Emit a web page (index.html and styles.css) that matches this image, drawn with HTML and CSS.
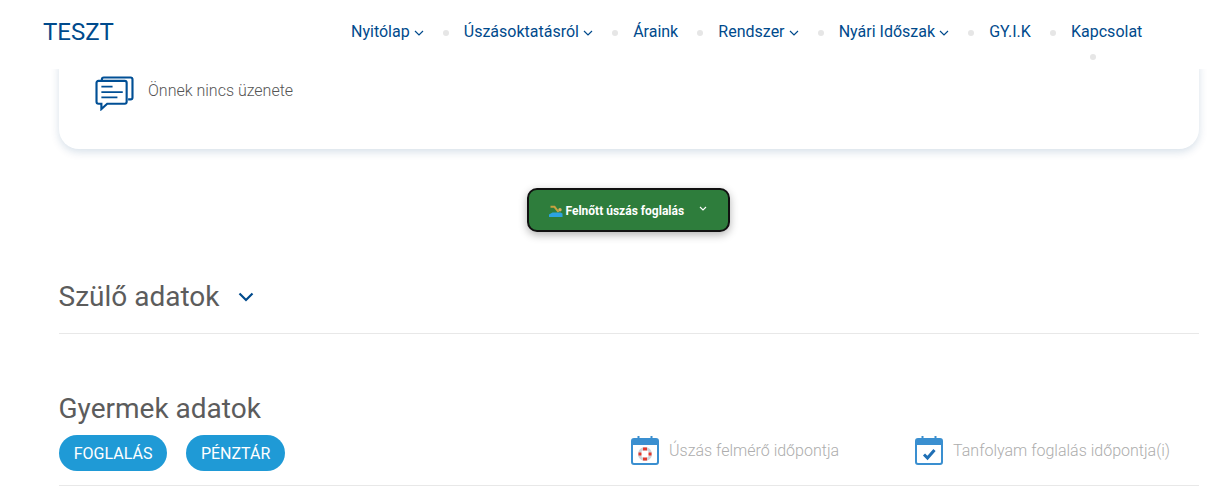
FILE: index.html
```html
<!DOCTYPE html>
<html lang="hu">
<head>
<meta charset="utf-8">
<title>TESZT</title>
<link rel="stylesheet" href="styles.css">
</head>
<body>
<header class="topbar">
  <a class="brand">TESZT</a>
  <nav class="nav">
    <a class="nav-item">Nyitólap<svg class="nav-chev" viewBox="0 0 10 6"><path d="M1 1l4 4 4-4"/></svg></a>
    <i class="dot"></i>
    <a class="nav-item">Úszásoktatásról<svg class="nav-chev" viewBox="0 0 10 6"><path d="M1 1l4 4 4-4"/></svg></a>
    <i class="dot"></i>
    <a class="nav-item">Áraink</a>
    <i class="dot"></i>
    <a class="nav-item">Rendszer<svg class="nav-chev" viewBox="0 0 10 6"><path d="M1 1l4 4 4-4"/></svg></a>
    <i class="dot"></i>
    <a class="nav-item">Nyári Időszak<svg class="nav-chev" viewBox="0 0 10 6"><path d="M1 1l4 4 4-4"/></svg></a>
    <i class="dot"></i>
    <a class="nav-item">GY.I.K</a>
    <i class="dot"></i>
    <a class="nav-item nav-last">Kapcsolat<i class="dot dot-wrapped"></i></a>
  </nav>
</header>
<main class="content">
  <section class="msg-card">
    <svg class="msg-icon" viewBox="0 0 40 36" fill="none">
      <path class="msg-back" d="M7 5V3.500A2 2 0 0 1 9 1.500h27.500a2 2 0 0 1 2 2V22a2 2 0 0 1-2 2H34"/>
      <path class="msg-front" d="M3.500 5h27a2 2 0 0 1 2 2v19.500a2 2 0 0 1-2 2H12.500L6.500 34v-5.500h-3a2 2 0 0 1-2-2V7a2 2 0 0 1 2-2z"/>
      <path class="msg-lines" d="M6.500 11H18M6.500 16.500H28.500M6.500 22H23"/>
    </svg>
    <p class="msg-text">Önnek nincs üzenete</p>
  </section>

  <div class="book-row">
    <button class="book-btn">
      <svg class="swim" viewBox="0 0 14 12"><path d="M1.500 1.800H5.500L9.500 7" fill="none" stroke="#c9a23f" stroke-width="2"/><circle cx="11" cy="4.800" r="1.700" fill="#d8b060"/><path d="M3.500 7.500h8l2 1v3.500H0V9.500z" fill="#2ca3e0"/></svg>
      <span>Felnőtt úszás foglalás</span>
      <svg class="book-chev" viewBox="0 0 8 5"><path d="M1 1l3 3 3-3"/></svg>
    </button>
  </div>

  <section class="parent">
    <h2 class="sec-title">Szülő adatok<svg class="sec-chev" viewBox="0 0 16 10"><path d="M1.500 1.500L8 8l6.500-6.500"/></svg></h2>
  </section>

  <section class="child">
    <h2 class="sec-title">Gyermek adatok</h2>
    <div class="child-row">
      <a class="pill pill-first">FOGLALÁS</a>
      <a class="pill">PÉNZTÁR</a>
      <div class="slot slot-first">
        <svg class="cal" viewBox="0 0 28 30" fill="none">
          <path class="cal-body" d="M3 4h22a2 2 0 0 1 2 2v21a2 2 0 0 1-2 2H3a2 2 0 0 1-2-2V6a2 2 0 0 1 2-2z"/>
          <path class="cal-head" d="M1 5h26v5H1z"/>
          <path class="cal-pin" d="M7.500 1v5M20.500 1v5"/>
          <circle cx="14" cy="19" r="5.500" stroke="#cfd3d8" stroke-width="3"/>
          <path d="M12 12.500h4v3h-4zM12 22.500h4v3h-4zM7.500 17.500h3v3h-3zM17.500 17.500h3v3h-3z" fill="#e2392d"/>
        </svg>
        <span>Úszás felmérő időpontja</span>
      </div>
      <div class="slot">
        <svg class="cal" viewBox="0 0 28 30" fill="none">
          <path class="cal-body" d="M3 4h22a2 2 0 0 1 2 2v21a2 2 0 0 1-2 2H3a2 2 0 0 1-2-2V6a2 2 0 0 1 2-2z"/>
          <path class="cal-head" d="M1 5h26v5H1z"/>
          <path class="cal-pin" d="M7.500 1v5M20.500 1v5"/>
          <path class="cal-check" d="M9 19.500l3.500 3.500 7-8"/>
        </svg>
        <span>Tanfolyam foglalás időpontja(i)</span>
      </div>
    </div>
  </section>
</main>
</body>
</html>
```
FILE: styles.css
```css
* { box-sizing: border-box; }
html, body { margin: 0; height: 498px; overflow: hidden; }
body { background: #fff; font-family: Roboto, "Liberation Sans", sans-serif; color: #555; }

.topbar {
  position: relative;
  z-index: 2;
  height: 69px;
  display: flex;
  align-items: flex-start;
  background: #fff;
  padding-left: 43px;
}
.brand { font-size: 24px; line-height: 28px; margin-top: 18px; color: #004a8c; width: 308px; }
.nav { display: flex; align-items: center; height: 20px; margin-top: 22px; }
.nav-item { display: flex; align-items: center; font-size: 16px; line-height: 20px; color: #004a8c; white-space: nowrap; }
.nav-chev { width: 10px; height: 6px; margin-left: 4px; margin-top: 1px; fill: none; stroke: #004a8c; stroke-width: 1.200; }
.dot { width: 6px; height: 6px; border-radius: 50%; background: #e6e6e6; margin: 1px 15px 0 19.150px; flex: none; }
.nav-last { position: relative; }
.dot-wrapped { position: absolute; left: 19px; top: 32px; margin: 0; }

.content { padding: 0 9px 0 59px; }
.msg-card {
  margin-top: -8px;
  height: 88px;
  display: flex;
  align-items: flex-start;
  background: #fff;
  border-radius: 0 0 20px 20px;
  box-shadow: 0 3px 8px rgba(0, 60, 120, .16);
  padding: 15px 0 0 36px;
}
.msg-icon { width: 39px; height: 35px; flex: none; }
.msg-back, .msg-front { stroke: #004f95; stroke-width: 2.200; }
.msg-lines { stroke: #004f95; stroke-width: 1.800; }
.msg-text { margin: 5px 0 0 14px; font-size: 16px; line-height: 19px; font-weight: 300; color: #555; }

.book-row { display: flex; justify-content: center; margin-top: 39px; padding-right: 2px; }
.book-btn {
  width: 203px;
  height: 44px;
  display: flex;
  align-items: center;
  padding: 2px 0 0 20px;
  background: #2e7d3c;
  border: 2px solid #111;
  border-radius: 10px;
  box-shadow: 0 3px 9px rgba(0, 0, 0, .3);
  color: #fff;
  font: 700 12px/14px Roboto, sans-serif;
}
.swim { width: 14px; height: 12px; margin: 0 3px 0 0; flex: none; }
.book-chev { width: 8px; height: 5px; margin: -5px 0 0 15px; fill: none; stroke: #fff; stroke-width: 1.100; }

.sec-title { margin: 0 0 0 -.500px; font-size: 28px; line-height: 33px; font-weight: 400; color: #5c5c5c; display: flex; align-items: center; }
.sec-chev { width: 16px; height: 10px; margin: 1px 0 0 19px; fill: none; stroke: #004a8c; stroke-width: 2.200; }
.parent { margin-top: 47px; height: 55px; border-bottom: 1px solid #e8e8e8; padding-top: 1px; }
.child { margin-top: 58px; }
.child-row { height: 51px; margin-top: 10px; display: flex; align-items: flex-start; border-bottom: 1px solid #e8e8e8; }
.pill {
  height: 36px;
  display: flex;
  align-items: center;
  padding: 0 14.750px;
  border-radius: 18px;
  background: #1f9ad6;
  color: #fff;
  font-size: 16px;
}
.pill-first { margin-right: 19px; }
.slot { display: flex; align-items: center; height: 30px; margin-top: 0; color: #adadad; font-size: 16px; font-weight: 300; white-space: nowrap; }
.slot-first { margin-left: 346px; margin-right: 76px; }
.cal { width: 28px; height: 30px; margin-right: 10px; flex: none; }
.cal-body { stroke: #3a8fd0; stroke-width: 2; fill: #fff; }
.cal-head { fill: #3a8fd0; }
.cal-pin { stroke: #3a8fd0; stroke-width: 2; }
.cal-check { stroke: #1f6fb5; stroke-width: 3; }
```
